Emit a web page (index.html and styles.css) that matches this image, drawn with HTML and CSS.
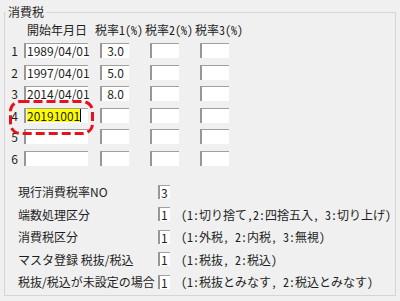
FILE: index.html
```html
<!DOCTYPE html>
<html lang="ja">
<head>
    <meta charset="UTF-8">
    <title>消費税</title>
    <link rel="stylesheet" href="styles.css">
</head>
<body>
    <fieldset class="group">
        <legend>消費税</legend>

        <div class="head">
            <span class="h-date">開始年月日</span>
            <span class="h-rate">税率1(%)</span>
            <span class="h-rate">税率2(%)</span>
            <span class="h-rate">税率3(%)</span>
        </div>

        <div class="rates">
            <div class="row">
                <span class="num">1</span>
                <span class="field date">1989/04/01</span>
                <span class="field rate first">3.0</span>
                <span class="field rate"></span>
                <span class="field rate"></span>
            </div>
            <div class="row">
                <span class="num">2</span>
                <span class="field date">1997/04/01</span>
                <span class="field rate first">5.0</span>
                <span class="field rate"></span>
                <span class="field rate"></span>
            </div>
            <div class="row">
                <span class="num">3</span>
                <span class="field date">2014/04/01</span>
                <span class="field rate first">8.0</span>
                <span class="field rate"></span>
                <span class="field rate"></span>
            </div>
            <div class="row">
                <span class="num">4</span>
                <span class="field date editing">
                    <span class="selected">20191001</span><span class="caret"></span>
                    <!-- annotation ring around the row being edited -->
                    <svg class="ring" width="85" height="35" viewBox="0 0 85 35">
                        <rect x="1.5" y="1.5" width="82" height="32" rx="10" ry="10"
                              fill="none" stroke="#e8101c" stroke-width="3" stroke-dasharray="9 4"/>
                    </svg>
                </span>
                <span class="field rate first"></span>
                <span class="field rate"></span>
                <span class="field rate"></span>
            </div>
            <div class="row">
                <span class="num">5</span>
                <span class="field date"></span>
                <span class="field rate first"></span>
                <span class="field rate"></span>
                <span class="field rate"></span>
            </div>
            <div class="row">
                <span class="num">6</span>
                <span class="field date"></span>
                <span class="field rate first"></span>
                <span class="field rate"></span>
                <span class="field rate"></span>
            </div>
        </div>

        <div class="options">
            <div class="opt">
                <span class="label">現行消費税率NO</span>
                <span class="field small">3</span>
            </div>
            <div class="opt">
                <span class="label">端数処理区分</span>
                <span class="field small">1</span>
                <span class="note">(1:切り捨て,2:四捨五入, 3:切り上げ)</span>
            </div>
            <div class="opt">
                <span class="label">消費税区分</span>
                <span class="field small">1</span>
                <span class="note">(1:外税, 2:内税, 3:無視)</span>
            </div>
            <div class="opt">
                <span class="label">マスタ登録 税抜/税込</span>
                <span class="field small">1</span>
                <span class="note">(1:税抜, 2:税込)</span>
            </div>
            <div class="opt">
                <span class="label">税抜/税込が未設定の場合</span>
                <span class="field small">1</span>
                <span class="note">(1:税抜とみなす, 2:税込とみなす)</span>
            </div>
        </div>
    </fieldset>
</body>
</html>
```

FILE: styles.css
```css
body {
    margin: 0;
    background-color: #f0f0f0;
    font-family: "Noto Sans CJK JP", sans-serif;
    font-size: 12px;
    color: #1e1e1e;
}
.group {
    box-sizing: border-box;
    height: 291px;
    margin: 5px 4px;
    padding: 0;
    border: 1px solid #d5d5d5;
    min-width: 0;
}
legend {
    margin-left: 1px;
    padding: 0 2px;
    line-height: 14px;
}
.head {
    display: flex;
    margin-top: 4px;
    line-height: 14px;
    white-space: nowrap;
    font-feature-settings: "hwid";
}
.h-date {
    margin-left: 22px;
    width: 68px;
}
.h-rate {
    width: 50px;
}
.rates {
    margin-top: 6px;
}
.row {
    display: flex;
    align-items: flex-start;
    height: 21.6px;
}
.num {
    width: 19px;
    text-align: center;
    line-height: 16px;
}
.field {
    box-sizing: border-box;
    display: block;
    height: 15px;
    background-color: #fff;
    border-top: 1px solid #a0a0a0;
    border-left: 2px solid #979797;
    line-height: 14px;
    white-space: nowrap;
}
.date {
    width: 64px;
    padding-left: 1px;
}
.rate {
    width: 29px;
    margin-left: 21px;
    text-align: center;
}
.rate.first {
    margin-left: 12px;
}
.editing {
    position: relative;
    display: flex;
    align-items: center;
}
.selected {
    background-color: #ffff00;
    line-height: 13px;
}
.caret {
    width: 1px;
    height: 13px;
    background-color: #000;
}
.ring {
    position: absolute;
    left: -17px;
    top: -9px;
}
.options {
    margin-top: 8px;
}
.opt {
    display: flex;
    align-items: center;
    height: 22.5px;
    white-space: nowrap;
}
.label {
    margin-left: 13px;
    width: 140px;
}
.small {
    width: 12px;
    height: 14px;
    padding-left: 1px;
    line-height: 13px;
}
.note {
    margin-left: 11px;
    font-feature-settings: "hwid";
}
```
